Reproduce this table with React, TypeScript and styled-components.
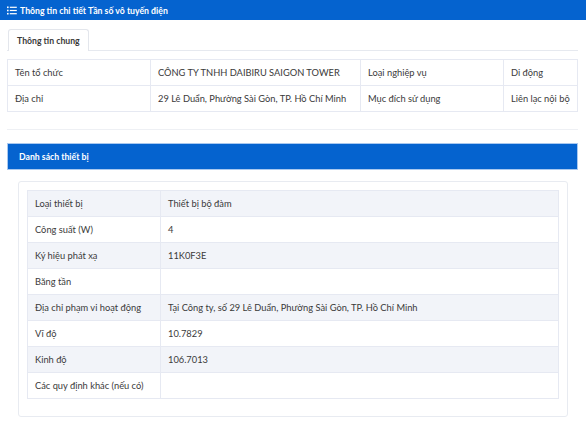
import React from "react";
import styled, { createGlobalStyle } from "styled-components";

const Global = createGlobalStyle`
  html, body { margin: 0; padding: 0; background: #fff; }
  body { font-family: Lato, "Noto Sans", sans-serif; color: #3a3a3a; font-size: 9.3px; }
  * { box-sizing: border-box; }
`;

const Page = styled.div`
  width: 586px;
  display: flex;
  flex-direction: column;
`;

const TopBar = styled.div`
  height: 20px;
  background: #0563cf;
  color: #fff;
  display: flex;
  align-items: center;
  gap: 3px;
  padding-left: 7px;
  font-size: 8.7px;
  font-weight: 700;
`;

const Body = styled.div`
  padding: 9px 8px 0 7px;
  display: flex;
  flex-direction: column;
`;

const TabBar = styled.div`
  display: flex;
  border-bottom: 1px solid #e6e9ef;
  padding-left: 1px;
`;

const Tab = styled.div`
  height: 22px;
  padding: 0 8px;
  display: flex;
  align-items: center;
  border: 1px solid #e3e6ec;
  border-bottom: none;
  border-radius: 3px 3px 0 0;
  font-weight: 700;
  font-size: 8.7px;
  margin-bottom: -1px;
  background: #fff;
`;

const InfoTable = styled.table`
  margin-top: 8px;
  width: 100%;
  border-collapse: collapse;
  border: 1px solid #e6e9f2;
  td {
    height: 26px;
    border: 1px solid #e6e9f2;
    padding: 0 7px;
    vertical-align: middle;
  }
`;

const Divider = styled.div`
  height: 1px;
  background: #eef0f4;
  margin-top: 17px;
`;

const SectionHead = styled.div`
  margin-top: 13px;
  height: 27px;
  background: #0563cf;
  border: 1px solid #a9c8ef;
  color: #fff;
  display: flex;
  align-items: center;
  padding-left: 11px;
  font-weight: 700;
  font-size: 8.7px;
`;

const Card = styled.div`
  margin: 11px 10px 0 11px;
  border: 1px solid #e8ebf1;
  border-radius: 3px;
  padding: 8px 8px 17px 8px;
`;

const DeviceTable = styled.table`
  width: 100%;
  border-collapse: collapse;
  border: 1px solid #e6e9f2;
  td {
    height: 26px;
    border: 1px solid #e6e9f2;
    padding: 0 7px;
    vertical-align: middle;
  }
  tr:nth-child(odd) td { background: #f2f4f9; }
`;

const ListIcon = () => (
  <svg width="10" height="9" viewBox="0 0 10 9" fill="#fff">
    <rect x="0" y="0.5" width="1.6" height="1.6" />
    <rect x="0" y="3.7" width="1.6" height="1.6" />
    <rect x="0" y="6.9" width="1.6" height="1.6" />
    <rect x="2.8" y="0.7" width="7" height="1.2" />
    <rect x="2.8" y="3.9" width="7" height="1.2" />
    <rect x="2.8" y="7.1" width="7" height="1.2" />
  </svg>
);

const devices: [string, string][] = [
  ["Loại thiết bị", "Thiết bị bộ đàm"],
  ["Công suất (W)", "4"],
  ["Ký hiệu phát xạ", "11K0F3E"],
  ["Băng tần", ""],
  ["Địa chỉ phạm vi hoạt động", "Tại Công ty, số 29 Lê Duẩn, Phường Sài Gòn, TP. Hồ Chí Minh"],
  ["Vĩ độ", "10.7829"],
  ["Kinh độ", "106.7013"],
  ["Các quy định khác (nếu có)", ""],
];

export default function App() {
  return (
    <Page>
      <Global />
      <TopBar>
        <ListIcon />
        <span>Thông tin chi tiết Tần số vô tuyến điện</span>
      </TopBar>
      <Body>
        <TabBar>
          <Tab>Thông tin chung</Tab>
        </TabBar>
        <InfoTable>
          <tbody>
            <tr>
              <td style={{ width: 143 }}>Tên tổ chức</td>
              <td style={{ width: 210 }}>CÔNG TY TNHH DAIBIRU SAIGON TOWER</td>
              <td style={{ width: 143 }}>Loại nghiệp vụ</td>
              <td>Di động</td>
            </tr>
            <tr>
              <td>Địa chỉ</td>
              <td>29 Lê Duẩn, Phường Sài Gòn, TP. Hồ Chí Minh</td>
              <td>Mục đích sử dụng</td>
              <td>Liên lạc nội bộ</td>
            </tr>
          </tbody>
        </InfoTable>
        <Divider />
        <SectionHead>Danh sách thiết bị</SectionHead>
        <Card>
          <DeviceTable>
            <tbody>
              {devices.map(([k, v]) => (
                <tr key={k}>
                  <td style={{ width: 133 }}>{k}</td>
                  <td>{v}</td>
                </tr>
              ))}
            </tbody>
          </DeviceTable>
        </Card>
      </Body>
    </Page>
  );
}
